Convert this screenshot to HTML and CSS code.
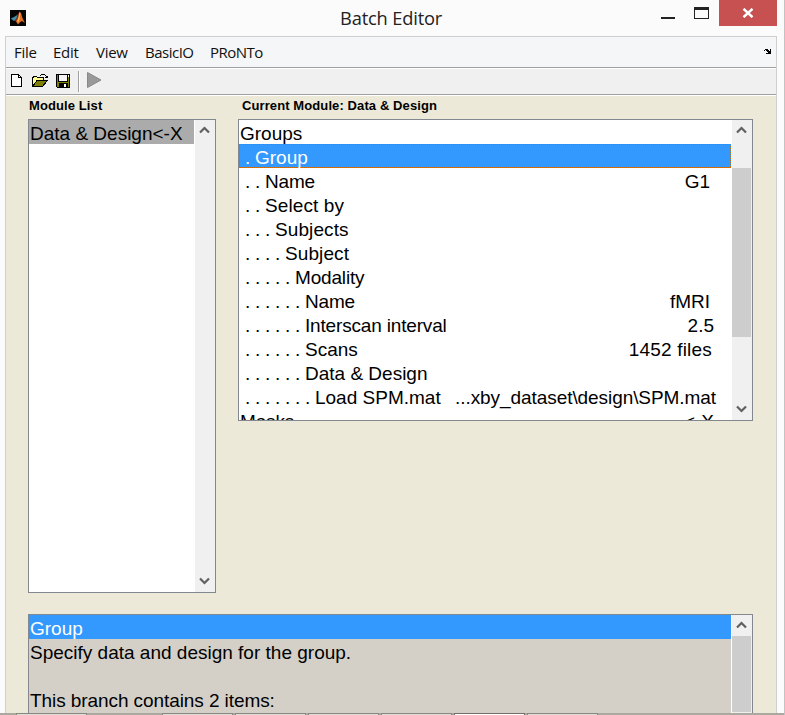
FILE: index.html
```html
<!DOCTYPE html>
<html lang="en">
<head>
<meta charset="utf-8">
<title>Batch Editor</title>
<link rel="stylesheet" href="styles.css">
</head>
<body>
<div class="window">
  <header class="titlebar">
    <svg class="app-icon" width="16" height="16" viewBox="0 0 16 16">
      <rect width="16" height="16" fill="#050505"/>
      <path d="M.8 8.600 4.500 6.800 8 4.500 6.500 9.500 4 11Z" fill="#3f8fa8"/>
      <path d="M7.500 4.500 9.500 2 8.500 8 6.500 12 4.500 10.500 6.500 8.500Z" fill="#7d2715"/>
      <path d="M9.500 1.500 11 3 12.500 8 15 13 12 11 10.300 12 8 14.500 6 11.500 8 8Z" fill="#e06a22"/>
      <path d="M9.500 2 10.300 4 9.700 9 8.200 13 7.300 11 8.500 7Z" fill="#f8b450"/>
    </svg>
    <h1 class="title"><span>Batch Editor</span></h1>
    <svg class="caption" width="60" height="26" viewBox="0 0 60 26" shape-rendering="crispEdges">
      <path d="M0 17h14v2H0z" fill="#222"/>
      <path d="M33 7h15v12H33zM34 10v8h13v-8z" fill="#222" fill-rule="evenodd"/>
    </svg>
    <div class="close">
      <svg width="12" height="10" viewBox="0 0 12 10"><path d="M1.500 .8 10.500 9.200M10.500 .8 1.500 9.200" stroke="#fff" stroke-width="2.500"/></svg>
    </div>
  </header>
  <div class="frame">
    <nav class="menubar">
      <span class="m-file">File</span><span class="m-edit">Edit</span><span class="m-view">View</span><span class="m-basic">BasicIO</span><span class="m-pronto">PRoNTo</span>
      <svg class="dock" width="8" height="6" viewBox="0 0 8 6" shape-rendering="crispEdges"><path d="M1 0h3v1h1v1h1V0h1v5H2V4h2V3H3V2H2V1H1zM0 1h1v1H0z" fill="#000"/></svg>
    </nav>
    <div class="toolbar">
      <svg width="100" height="24" viewBox="0 0 100 24">
        <g shape-rendering="crispEdges">
          <path d="M5.500 5.500h7l3 3v9h-10z" fill="#fff" stroke="#000"/>
          <path d="M12.500 5.500v3h3" fill="none" stroke="#000"/>
          <path d="M26.500 17V8.500h1v-1h3l1 1h6v3h-6l-5 6" fill="#fffb92" stroke="#000"/>
          <path d="M26.500 17.500 31 11.500h10.500l-5 6z" fill="#808000" stroke="#000"/>
          <path d="M34 6h1V5h4v1h1v1h2v2h-3V8h1V7h-1V6h-4v1h-1z" fill="#000"/>
          <path d="M50.500 5.500h13v13h-12l-1-1z" fill="#808000" stroke="#000"/>
          <path d="M53 6h8v6h-8z" fill="#f4f4f4"/>
          <path d="M52 5h1v7h-1zM61 5h1v7h-1zM52 12h10v1H52zM53 14h9v4h-9z" fill="#000"/>
          <path d="M58 15h2v3h-2zM62 6h1v2h-1z" fill="#fff"/>
          <path d="M72 2h1v21h-1z" fill="#a0a0a0"/><path d="M73 2h1v21h-1z" fill="#fff"/>
        </g>
        <path d="M81.500 3.500 95 11 81.500 18.500z" fill="#999" stroke="#888"/>
      </svg>
    </div>
    <main class="content">
      <div class="lists">
        <section class="modules">
          <h2>Module List</h2>
          <div class="box module-box">
            <div class="rows"><div class="row gray"><span>Data &amp; Design&lt;-X</span></div></div>
            <div class="scroll">
              <svg width="11" height="8" viewBox="0 0 11 8"><path d="M1 6.500 5.500 2 10 6.500" class="chev"/></svg>
              <svg width="11" height="8" viewBox="0 0 11 8"><path d="M1 1.500 5.500 6 10 1.500" class="chev"/></svg>
            </div>
          </div>
        </section>
        <section class="current">
          <h2>Current Module: Data &amp; Design</h2>
          <div class="box current-box">
            <div class="rows">
              <div class="row"><span>Groups</span></div>
              <div class="row blue focus"><i>. </i><span>Group</span></div>
              <div class="row"><i>. . </i><span class="tight">Name</span><b class="v21">G1</b></div>
              <div class="row"><i>. . </i><span class="loose">Select by</span></div>
              <div class="row"><i>. . . </i><span class="loose">Subjects</span></div>
              <div class="row"><i>. . . . </i><span class="loose">Subject</span></div>
              <div class="row"><i>. . . . . </i><span class="tight">Modality</span></div>
              <div class="row"><i>. . . . . . </i><span class="tight">Name</span><b class="v21">fMRI</b></div>
              <div class="row"><i>. . . . . . </i><span class="tight">Interscan interval</span><b class="v17">2.5</b></div>
              <div class="row"><i>. . . . . . </i><span>Scans</span><b class="v19 files">1452 files</b></div>
              <div class="row"><i>. . . . . . </i><span>Data &amp; Design</span></div>
              <div class="row"><i>. . . . . . . </i><span>Load SPM.mat</span><b class="v15 path">...xby_dataset\design\SPM.mat</b></div>
              <div class="row"><span class="tight">Masks</span><b class="v17">&lt;-X</b></div>
            </div>
            <div class="scroll">
              <svg width="11" height="8" viewBox="0 0 11 8"><path d="M1 6.500 5.500 2 10 6.500" class="chev"/></svg>
              <div class="thumb"></div>
              <svg width="11" height="8" viewBox="0 0 11 8"><path d="M1 1.500 5.500 6 10 1.500" class="chev"/></svg>
            </div>
          </div>
        </section>
      </div>
      <section class="box help-box">
        <div class="rows">
          <div class="row blue"><span>Group</span></div>
          <div class="row"><span>Specify data and design for the group.</span></div>
          <div class="row"></div>
          <div class="row"><span class="items">This branch contains 2 items:</span></div>
        </div>
        <div class="scroll">
          <svg width="11" height="8" viewBox="0 0 11 8"><path d="M1 6.500 5.500 2 10 6.500" class="chev"/></svg>
          <div class="thumb"></div>
        </div>
      </section>
    </main>
  </div>
  <footer class="strip"><div class="first"></div><div></div><div></div><div></div><div></div><div class="active"></div><div></div></footer>
</div>
</body>
</html>
```
FILE: styles.css
```css
* { box-sizing: border-box; }
body { margin: 0; overflow: hidden; background: #fbfbfb; color: #000; }
svg { display: block; flex: none; }
.window { position: relative; width: 785px; height: 715px; overflow: hidden; border-right: 1px solid #c3c3c3; }
.titlebar { height: 36px; display: flex; align-items: flex-start; padding-left: 10px; }
.app-icon { margin-top: 10px; }
.title { flex: 1; margin: 0; padding: 5px 0 0 314px; font: 18.300px/26px "Open Sans", sans-serif; letter-spacing: -.17px; color: #222; white-space: nowrap; }
.caption { margin-right: -2px; }
.close { width: 58px; height: 26px; background: #c75050; display: flex; align-items: center; justify-content: center; margin-right: 7px; padding-right: 1px; }
.frame { margin-left: 5px; width: 772px; height: 679px; border: 1px solid #cfcfcf; border-bottom: 0; background: #ece9d8; }
.menubar { height: 31px; display: flex; align-items: center; padding-left: 8px; background: #f5f6f7; border-bottom: 1px solid #a0a0a0; font: 15px/30px "Open Sans", sans-serif; letter-spacing: -.3px; color: #111; }
.menubar span { white-space: nowrap; flex: none; }
.m-file { width: 39px; }
.m-edit { width: 43px; }
.m-view { width: 49px; }
.m-basic { width: 65px; letter-spacing: -.5px; }
.m-pronto { letter-spacing: -.5px; }
.dock { margin: 0 4px 0 auto; }
.toolbar { height: 27px; background: #f0f0f0; border-top: 1px solid #fff; border-bottom: 1px solid #a0a0a0; }
.content { border-top: 1px solid #fff; height: 620px; padding-left: 22px; }
.lists { display: flex; gap: 22px; height: 518px; }
h2 { margin: 0; height: 23px; font: bold 13px/20px "Liberation Sans", Arial, sans-serif; letter-spacing: .1px; padding-left: 1px; white-space: nowrap; }
.current h2 { padding-left: 4px; }
.box { display: flex; border: 1px solid #828790; background: #fff; overflow: hidden; }
.module-box { width: 188px; height: 474px; }
.current-box { width: 515px; height: 302px; }
.help-box { width: 725px; height: 110px; }
.help-box .rows { background: #d4d0c8; }
.rows { flex: 1; min-width: 0; font: 19px/28px "Liberation Sans", Arial, sans-serif; }
.row { height: 24px; display: flex; padding-left: 1px; white-space: pre; }
.row i { font-style: normal; padding-left: 5px; word-spacing: -.56px; }
.row b { font-weight: normal; margin-left: auto; }
.tight { letter-spacing: -.17px; }
.loose { letter-spacing: .1px; }
.items { letter-spacing: -.08px; }
.row .files { letter-spacing: .2px; }
.row .path { letter-spacing: -.07px; }
.v15 { padding-right: 15px; }
.v17 { padding-right: 17px; }
.v19 { padding-right: 19px; }
.v21 { padding-right: 21px; }
.gray { background: #ababab; }
.blue { background: #3399ff; color: #fff; }
/* One-pixel dotted focus rectangle, alternating with the selection colour. */
.focus {
  background:
    repeating-linear-gradient(90deg, #cc6600 0 1px, #3399ff 1px 2px) top / 100% 1px no-repeat,
    repeating-linear-gradient(90deg, #3399ff 0 1px, #cc6600 1px 2px) bottom / 100% 1px no-repeat,
    repeating-linear-gradient(#cc6600 0 1px, #3399ff 1px 2px) left / 1px 100% no-repeat,
    repeating-linear-gradient(#cc6600 0 1px, #3399ff 1px 2px) right / 1px 100% no-repeat,
    #3399ff;
}
.scroll { width: 20px; background: #f0f0f0; margin-left: 1px; display: flex; flex-direction: column; align-items: center; justify-content: space-between; padding: 6px 1px 7px 0; }
.help-box .scroll { box-shadow: -1px 0 #fff; }
.chev { fill: none; stroke: #606060; stroke-width: 2.200; }
.thumb { flex: none; width: 19px; height: 169px; background: #cdcdcd; }
.current-box .thumb { margin-bottom: 68px; margin-top: 34px; }
.current-box .scroll { justify-content: flex-start; }
.help-box .scroll { justify-content: flex-start; }
.help-box .thumb { margin-top: 7px; height: 76px; }
.strip { position: absolute; left: 0; right: -1px; bottom: 0; height: 2px; background: #aaa89f; display: flex; gap: 2px; padding-left: 16px; }
.strip div { width: 71px; height: 2px; border: 1px solid #898781; border-bottom: 0; background: #dedcd7; }
.strip .first { margin-right: 73px; }
.strip .active { background: #fff; border-color: #716d69; }
```
